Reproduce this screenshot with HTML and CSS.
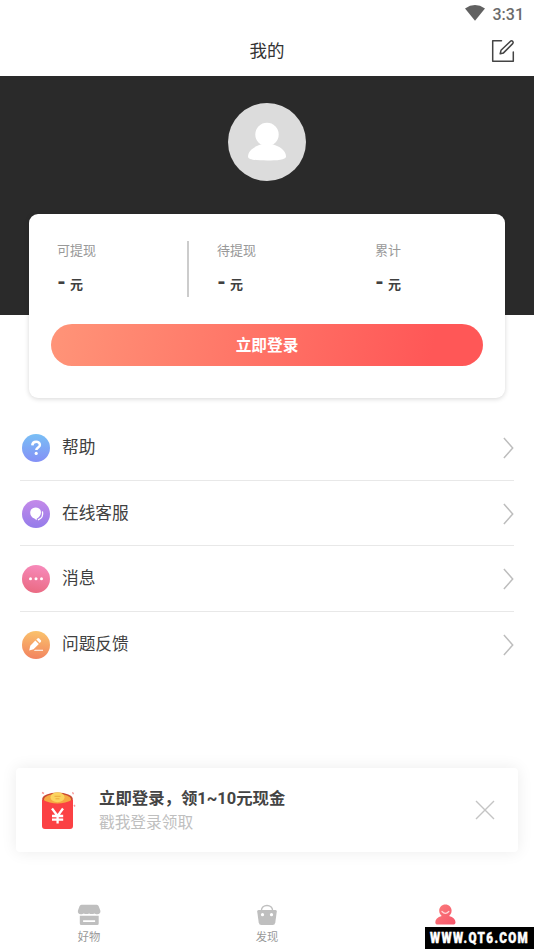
FILE: index.html
```html
<!DOCTYPE html>
<html lang="zh-CN">
<head>
<meta charset="utf-8">
<title>我的</title>
<link rel="stylesheet" href="styles.css">
</head>
<body>
<div class="screen">
  <div class="status">
    <svg width="20" height="16" viewBox="0 0 20 16"><path d="M0 3.500Q10-3.300 20 3.500L10 15.800Z" fill="#616161"/></svg>
    <span>3:31</span>
  </div>
  <header class="header">
    <span></span>
    <h1>我的</h1>
    <svg class="edit" width="24" height="24" viewBox="0 0 24 24" fill="none" stroke="#444" stroke-width="1.500" stroke-linecap="round" stroke-linejoin="round"><path d="M10.500 1.700H1.700V22.300H22.300V13"/><path d="M9.200 14.700l.8-3.400L19.500 2.200q1.200-.8 2.200.2.900 1.100 0 2.200L12.500 13.900Z"/></svg>
  </header>
  <section class="hero">
    <svg class="avatar" width="78" height="78" viewBox="0 0 78 78"><circle cx="39" cy="39" r="39" fill="#dcdcdc"/><circle cx="39" cy="31.500" r="11.700" fill="#fff"/><path d="M20 53.500C20 47.500 27 43 33 41.500h12C51 43 58 47.500 58 53.500 58 57 49 57.500 39 57.500s-19-.5-19-4Z" fill="#fff"/></svg>
  </section>
  <section class="card">
    <div class="stats">
      <div class="stat"><p>可提现</p><b><i>-</i>元</b></div>
      <div class="stat"><p>待提现</p><b><i>-</i>元</b></div>
      <div class="stat"><p>累计</p><b><i>-</i>元</b></div>
    </div>
    <div class="login">立即登录</div>
  </section>
  <nav class="list">
    <div class="row">
      <svg width="28" height="28" viewBox="0 0 28 28"><defs><linearGradient id="g1" x1="0" y1="0" x2="0" y2="1"><stop stop-color="#79bff5"/><stop offset="1" stop-color="#8490f6"/></linearGradient></defs><circle cx="14" cy="14" r="14" fill="url(#g1)"/><path d="M10.300 11.400c.1-4.900 7.600-4.900 7.600-.5 0 2.500-3.600 2.600-3.600 5.200" fill="none" stroke="#fff" stroke-width="2.500"/><circle cx="14.200" cy="19.400" r="1.600" fill="#fff"/></svg>
      <span>帮助</span>
      <svg class="arrow" width="11" height="22" viewBox="0 0 11 22"><path d="M.9 1l8.800 10L.9 21"/></svg>
    </div>
    <div class="row">
      <svg width="28" height="28" viewBox="0 0 28 28"><defs><linearGradient id="g2" x1="0" y1="0" x2="0" y2="1"><stop stop-color="#c48ae9"/><stop offset="1" stop-color="#947cea"/></linearGradient></defs><circle cx="14" cy="14" r="14" fill="url(#g2)"/><path d="M13.700 7.500c3.500 0 5.300 2.300 5.300 5 0 3-2.200 5.200-4.300 6.300v1.500l-2.300-1.700C10 17.600 8.200 15.500 8.200 12.700c0-3 2.200-5.200 5.500-5.200Z" fill="#fff"/><path d="M20.500 12c.8 3.700-1.200 6.400-4 7.700" fill="none" stroke="#fff" stroke-width="1.300" stroke-linecap="round"/></svg>
      <span>在线客服</span>
      <svg class="arrow" width="11" height="22" viewBox="0 0 11 22"><path d="M.9 1l8.800 10L.9 21"/></svg>
    </div>
    <div class="row">
      <svg width="28" height="28" viewBox="0 0 28 28"><defs><linearGradient id="g3" x1=".6" y1="0" x2=".4" y2="1"><stop stop-color="#f78abb"/><stop offset="1" stop-color="#ea6a82"/></linearGradient></defs><circle cx="14" cy="14" r="14" fill="url(#g3)"/><g fill="#fff"><circle cx="8.500" cy="13.800" r="1.500"/><circle cx="14" cy="13.800" r="1.500"/><circle cx="19.500" cy="13.800" r="1.500"/></g></svg>
      <span>消息</span>
      <svg class="arrow" width="11" height="22" viewBox="0 0 11 22"><path d="M.9 1l8.800 10L.9 21"/></svg>
    </div>
    <div class="row">
      <svg width="28" height="28" viewBox="0 0 28 28"><defs><linearGradient id="g4" x1=".5" y1="0" x2=".4" y2="1"><stop stop-color="#fac26c"/><stop offset="1" stop-color="#f2835f"/></linearGradient></defs><circle cx="14" cy="14" r="14" fill="url(#g4)"/><g fill="#fff"><path d="M7.200 19.500l1.100-4.700 5-5.200 3.500 3.400-5.200 5.300Z"/><path d="M14.300 8.600l1.200-1.200q.8-.6 1.600.1l1.800 1.800q.6.800-.1 1.600L17.700 12Z"/><path d="M13 18.700h8v1.100H11.800Z"/></g></svg>
      <span>问题反馈</span>
      <svg class="arrow" width="11" height="22" viewBox="0 0 11 22"><path d="M.9 1l8.800 10L.9 21"/></svg>
    </div>
  </nav>
  <section class="promo">
    <svg width="36" height="40" viewBox="0 0 36 40"><ellipse cx="17.500" cy="9" rx="15.300" ry="6.500" fill="#c94832"/><ellipse cx="17.500" cy="9.500" rx="13.500" ry="5.700" fill="#f6a943"/><ellipse cx="17.500" cy="7.300" rx="7" ry="5" fill="#fbd45f"/><path d="M14.500 6.300h6m-5 2.500h4" stroke="#eda93c"/><path d="M2 9.500q15.500 8 31 0V36q0 3-3 3H5q-3 0-3-3Z" fill="#fb4144"/><path d="M12 18.500l5.600 7.500 5.400-7.500M17.600 26v7.500M12 26h11.200M12 29.700h11.200" fill="none" stroke="#fff" stroke-width="2.300"/><path d="M2 2.500l2 1M32.500 2.200l1 2M34 15l1 1.500" stroke="#f69a9a" stroke-width="1.400"/></svg>
    <div class="copy"><strong>立即登录，领1~10元现金</strong><span>戳我登录领取</span></div>
    <svg class="close" width="20" height="20" viewBox="0 0 20 20"><path d="M1 1l18 18M19 1L1 19" stroke="#c4c4c4" stroke-width="1.400"/></svg>
  </section>
  <footer class="tabs">
    <div class="tab">
      <svg width="24" height="22" viewBox="0 0 24 22" fill="#bfbfbf"><path d="M4.500.8h15.200q1.500 0 2 1.500l1.700 4.500c.3 2-1 3.500-3 3.500-1.500 0-2.300-.3-3-.8-1.300.8-4 .8-5.300 0-1.300.8-4 .8-5.300 0-.8.500-1.500.8-3 .8-2 0-3.300-1.500-2.900-3.500L2.500 2.300Q3 .8 4.500.8Z"/><path d="M2.800 11.800h18.900v7.700q0 1.500-1.500 1.500H4.300q-1.500 0-1.500-1.500Zm3.300 4.500v1.600h12v-1.600Z" fill-rule="evenodd"/></svg>
      <span>好物</span>
    </div>
    <div class="tab">
      <svg width="24" height="22" viewBox="0 0 24 22"><path d="M6.300 7C6.300-.3 17.700-.3 17.700 7" fill="none" stroke="#bfbfbf" stroke-width="1.500"/><path d="M3.500 6h17q1.500 0 1.300 1.500l-1.500 11q-.4 2.500-2.700 2.500H6.400q-2.300 0-2.700-2.500l-1.500-11Q2 6 3.500 6Z" fill="#bfbfbf"/><circle cx="7.500" cy="10.700" r="1.600" fill="#fff"/><circle cx="16.500" cy="10.700" r="1.600" fill="#fff"/></svg>
      <span>发现</span>
    </div>
    <div class="tab">
      <svg width="24" height="22" viewBox="0 0 24 22"><defs><linearGradient id="g5" x1="0" y1="0" x2="1" y2="1"><stop stop-color="#fb7c7b"/><stop offset="1" stop-color="#f6556b"/></linearGradient></defs><path d="M12.400.5c3.500 0 6.200 2.700 6.200 6.100 0 2.300-.9 4.100-2.500 5.400 4.200 1.100 6.400 3.300 6.400 6.200 0 1.500-.9 2.300-2.500 2.300H4.800c-1.600 0-2.500-.8-2.500-2.300 0-2.900 2.200-5.100 6.400-6.200-1.600-1.300-2.500-3.100-2.500-5.400C6.200 3.200 8.900.5 12.400.5Z" fill="url(#g5)"/><path d="M9 7.500q3.400 3.600 6.800 0" fill="none" stroke="#ffd9dc" stroke-width="1.300" stroke-linecap="round"/></svg>
    </div>
  </footer>
  <div class="mark"><span>WWW.QT6.COM</span></div>
</div>
</body>
</html>
```
FILE: styles.css
```css
* { box-sizing: border-box; margin: 0; padding: 0; }
body { background: #fff; color: #404040; font-family: Roboto, "Noto Sans CJK SC", sans-serif; }
svg { display: block; flex: none; }
.screen { position: relative; display: flex; flex-direction: column; width: 534px; height: 949px; overflow: hidden; }
.status { display: flex; justify-content: flex-end; align-items: center; gap: 8px; height: 26px; padding-right: 10px; font-size: 16px; font-weight: 500; color: #6b6b6b; }
.status span { padding-top: 3px; }
.header { display: grid; grid-template-columns: 1fr auto 1fr; align-items: center; height: 50px; padding: 0 19px; }
.header h1 { font-size: 17.500px; font-weight: 400; line-height: 26px; color: #333; }
.edit { justify-self: end; }
.hero { height: 239px; flex: none; background: #2a2a2a; padding-top: 27px; }
.avatar { margin: 0 auto; }
.card { width: 476px; height: 184px; flex: none; margin: -101px auto 0; padding: 27px 22px 0; background: #fff; border-radius: 9px; box-shadow: 0 1px 5px rgba(0, 0, 0, .16); }
.stats { display: grid; grid-template-columns: 138px 158px 1fr; height: 56px; }
.stat { padding-left: 28px; }
.stat:first-child { padding-left: 6px; border-right: 2px solid #ccc; }
.stat p { font-size: 13px; line-height: 20px; color: #999; }
.stat b { display: flex; align-items: baseline; font-size: 13px; line-height: 24px; margin-top: 9px; }
.stat i { width: 13px; font-size: 20px; font-weight: 900; font-style: normal; }
.login { margin-top: 27px; height: 42px; border-radius: 21px; background: linear-gradient(100deg, #ff9478, #ff5757 88%); color: #fff; text-align: center; font-size: 15.700px; font-weight: 700; line-height: 44px; }
.list { margin: 17px 20px 0; }
.row { display: flex; align-items: center; height: 65.700px; padding: 0 0 0 2px; border-bottom: 1px solid #e8e8e8; }
.row:last-child { border-bottom: 0; }
.row svg { margin-top: 1px; }
.row span { flex: 1; margin-left: 12px; font-size: 16.700px; line-height: 26px; padding-top: 1px; }
.arrow path { fill: none; stroke: #bdbdbd; stroke-width: 1.500; }
.promo { display: flex; align-items: center; width: 502px; height: 84px; flex: none; margin: 90.200px 0 0 16px; padding: 0 23px 0 24px; background: #fff; border-radius: 4px; box-shadow: 0 0 16px rgba(0, 0, 0, .08); }
.copy { flex: 1; margin-left: 23px; padding-top: 3px; display: flex; flex-direction: column; }
.copy strong { font-size: 16.400px; line-height: 24px; color: #444; }
.copy span { font-size: 15.700px; line-height: 24px; color: #bfbfbf; }
.tabs { display: grid; grid-template-columns: repeat(3, 1fr); margin-top: 52px; }
.tab { display: flex; flex-direction: column; align-items: center; gap: 3px; font-size: 11.300px; line-height: 18px; color: #999; }
.mark { position: absolute; right: 0; bottom: 0; width: 109px; height: 22px; background: #000; color: #fff; font-weight: 900; font-size: 15.500px; line-height: 23px; letter-spacing: 1.800px; }
.mark span { display: block; width: 100px; margin-left: 5px; white-space: nowrap; transform: scaleX(.75); transform-origin: left; -webkit-text-stroke: .5px #fff; }
```
